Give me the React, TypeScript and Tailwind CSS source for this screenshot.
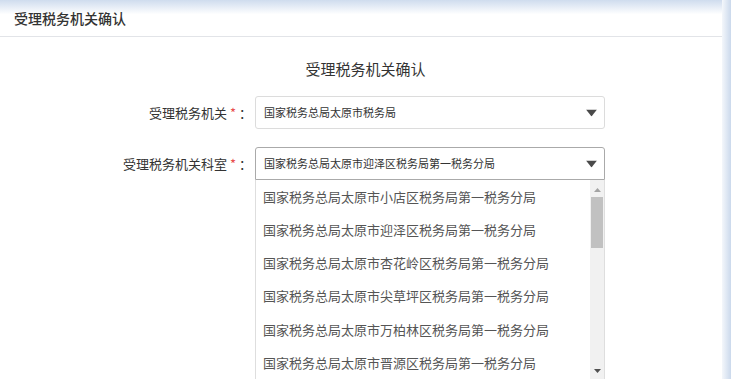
import React from "react";

const items = [
  "国家税务总局太原市小店区税务局第一税务分局",
  "国家税务总局太原市迎泽区税务局第一税务分局",
  "国家税务总局太原市杏花岭区税务局第一税务分局",
  "国家税务总局太原市尖草坪区税务局第一税务分局",
  "国家税务总局太原市万柏林区税务局第一税务分局",
  "国家税务总局太原市晋源区税务局第一税务分局",
];

function Arrow() {
  return (
    <svg width="11" height="7" viewBox="0 0 11 7" className="absolute right-[7px] top-1/2 -translate-y-1/2">
      <polygon points="0,0 11,0 5.5,7" fill="#4a4a4a" />
    </svg>
  );
}

function Label({ text, className }: { text: string; className?: string }) {
  return (
    <div className={"w-[252px] shrink-0 text-right text-[13px] text-[#333] leading-none " + (className ?? "")}>
      {text}
      <span className="text-[#e84c4c] ml-[3px]">*</span>
      <span className="ml-[3px]">：</span>
    </div>
  );
}

export default function App() {
  return (
    <div
      className="w-[731px] h-[379px] overflow-hidden bg-white flex"
      style={{ fontFamily: '"Noto Sans CJK SC", "Noto Sans", sans-serif' }}
    >
      <div className="flex-1 flex flex-col min-w-0">
        <div className="h-[37px] shrink-0 bg-gradient-to-b from-[#cfdcee] via-white via-40% to-white border-b border-[#e2e4e8] flex items-center pl-[14px] text-[14px] text-[#333] font-medium">
          受理税务机关确认
        </div>
        <div className="mt-[22px] text-center text-[15px] leading-[20px] text-[#333] pl-[9px]">
          受理税务机关确认
        </div>
        <div className="mt-[17px] flex flex-col gap-[18px]">
          <div className="flex items-center">
            <Label text="受理税务机关" />
            <div className="relative ml-[3px] w-[350px] h-[33px] border border-[#dcdcdc] rounded-[3px] flex items-center pl-[8px] text-[11px] text-[#333]">
              国家税务总局太原市税务局
              <Arrow />
            </div>
          </div>
          <div className="flex items-start">
            <Label text="受理税务机关科室" className="mt-[10px]" />
            <div className="ml-[3px] w-[350px] flex flex-col">
              <div className="relative h-[33px] border border-[#aaaaaa] rounded-t-[3px] flex items-center pl-[8px] text-[11px] text-[#333]">
                国家税务总局太原市迎泽区税务局第一税务分局
                <Arrow />
              </div>
              <div className="flex border-x border-[#dedede] h-[220px]">
                <div className="flex-1 flex flex-col">
                  {items.map((t) => (
                    <div key={t} className="h-[33.2px] shrink-0 flex items-center pl-[7px] text-[13px] text-[#555]">
                      {t}
                    </div>
                  ))}
                </div>
                <div className="w-[14px] bg-[#f1f1f1] flex flex-col items-center h-[200px]">
                  <svg width="7" height="4" viewBox="0 0 7 4" className="mt-[8px]">
                    <polygon points="3.5,0 7,4 0,4" fill="#a3a3a3" />
                  </svg>
                  <div className="mt-[5px] w-[12px] h-[51px] bg-[#c1c1c1]" />
                  <div className="flex-1" />
                  <svg width="7" height="4" viewBox="0 0 7 4" className="mb-[7px]">
                    <polygon points="0,0 7,0 3.5,4" fill="#505050" />
                  </svg>
                </div>
              </div>
            </div>
          </div>
        </div>
      </div>
      <div className="w-[9px] shrink-0 bg-gradient-to-r from-[#f4f7fb] to-[#cbd9ec]" />
    </div>
  );
}
